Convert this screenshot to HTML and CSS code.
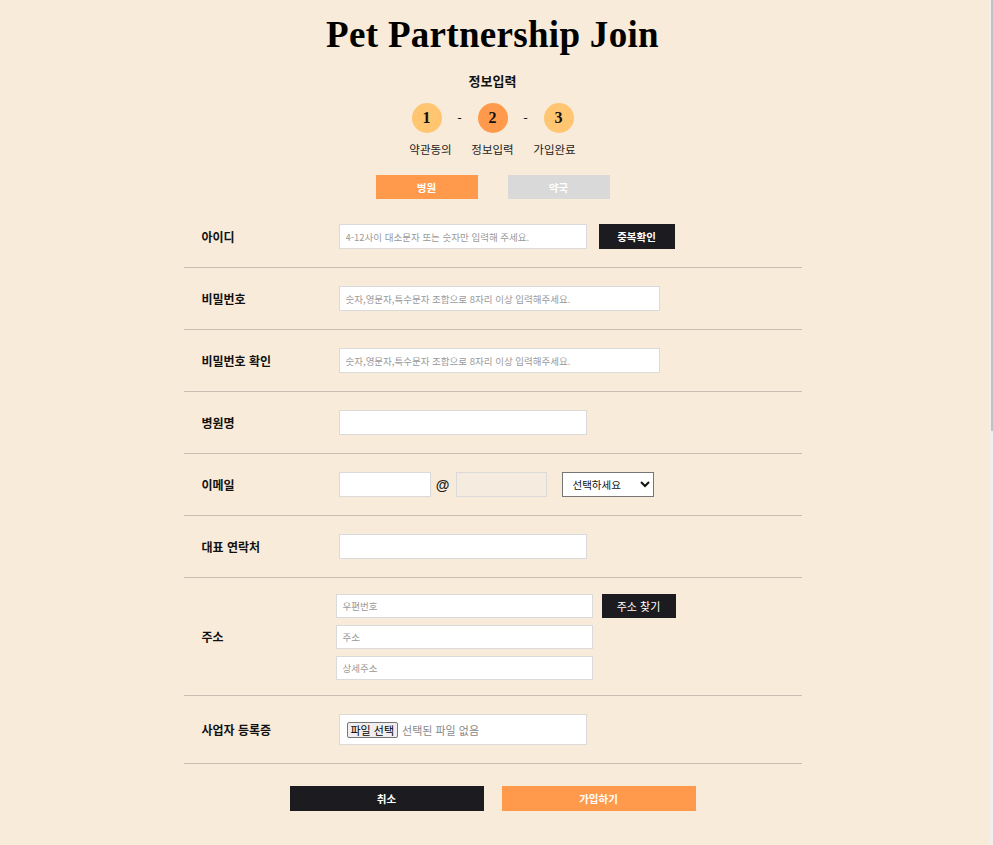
FILE: index.html
```html
<!DOCTYPE html>
<html lang="ko">
<head>
<meta charset="utf-8">
<title>Pet Partnership Join</title>
<link rel="stylesheet" href="styles.css">
</head>
<body>
<div class="page">
  <h1 class="title">Pet Partnership Join</h1>
  <h2 class="step-title">정보입력</h2>
  <div class="steps">
    <span class="circle light">1</span>
    <span class="dash">-</span>
    <span class="circle active">2</span>
    <span class="dash">-</span>
    <span class="circle light">3</span>
  </div>
  <div class="step-labels">
    <span>약관동의</span>
    <span>정보입력</span>
    <span>가입완료</span>
  </div>
  <div class="tabs">
    <button class="tab on" type="button">병원</button>
    <button class="tab off" type="button">약국</button>
  </div>

  <form class="form">
    <div class="row">
      <label class="label">아이디</label>
      <div class="field">
        <input class="inp w248" type="text" placeholder="4-12사이 대소문자 또는 숫자만 입력해 주세요.">
        <button class="dark-btn check" type="button">중복확인</button>
      </div>
    </div>
    <div class="row">
      <label class="label">비밀번호</label>
      <div class="field">
        <input class="inp w321" type="password" placeholder="숫자,영문자,특수문자 조합으로 8자리 이상 입력해주세요.">
      </div>
    </div>
    <div class="row">
      <label class="label">비밀번호 확인</label>
      <div class="field">
        <input class="inp w321" type="password" placeholder="숫자,영문자,특수문자 조합으로 8자리 이상 입력해주세요.">
      </div>
    </div>
    <div class="row">
      <label class="label">병원명</label>
      <div class="field">
        <input class="inp w248" type="text">
      </div>
    </div>
    <div class="row">
      <label class="label">이메일</label>
      <div class="field">
        <input class="inp w92" type="text">
        <span class="at">@</span>
        <input class="inp w91 disabled" type="text" disabled>
        <select class="sel">
          <option>선택하세요</option>
          <option>naver.com</option>
          <option>gmail.com</option>
        </select>
      </div>
    </div>
    <div class="row">
      <label class="label">대표 연락처</label>
      <div class="field">
        <input class="inp w248" type="text">
      </div>
    </div>
    <div class="row addr-row">
      <label class="label narrow">주소</label>
      <div class="addr">
        <div class="addr-line">
          <input class="inp w257 short" type="text" placeholder="우편번호">
          <button class="dark-btn find" type="button">주소 찾기</button>
        </div>
        <input class="inp w257 short" type="text" placeholder="주소">
        <input class="inp w257 short" type="text" placeholder="상세주소">
      </div>
    </div>
    <div class="row file-row">
      <label class="label">사업자 등록증</label>
      <div class="field">
        <div class="filebox">
          <span class="file-btn">파일 선택</span>
          <span class="file-text">선택된 파일 없음</span>
        </div>
      </div>
    </div>
  </form>

  <div class="actions">
    <button class="act cancel" type="button">취소</button>
    <button class="act join" type="button">가입하기</button>
  </div>
</div>
<div class="scrollbar"><div class="thumb"></div></div>
</body>
</html>
```

FILE: styles.css
```css
html {
  background: #f8ebd9;
}
body {
  margin: 0;
  background: #f8ebd9;
  font-family: "Noto Sans CJK KR", "Noto Sans", sans-serif;
  color: #111;
}
.page {
  box-sizing: border-box;
  min-height: 1657px;
  padding-right: 8px;
  display: flex;
  flex-direction: column;
  align-items: center;
}
.scrollbar {
  position: fixed;
  top: 0;
  right: 0;
  width: 4px;
  height: 100vh;
  background: #f1eeee;
}
.thumb {
  margin-left: 2px;
  width: 2px;
  height: 431px;
  background: #c1c1c1;
}
.title {
  margin: 15px 0 0;
  font-family: "Liberation Serif", serif;
  font-weight: 700;
  font-size: 37px;
  letter-spacing: 0.3px;
  line-height: 40px;
  color: #000;
}
.step-title {
  margin: 16px 0 0;
  font-size: 13px;
  font-weight: 700;
  line-height: 20px;
  color: #111;
}
.steps {
  margin-top: 12px;
  display: flex;
  align-items: center;
}
.circle {
  width: 30px;
  height: 30px;
  border-radius: 50%;
  display: flex;
  align-items: center;
  justify-content: center;
  font-family: "Liberation Serif", serif;
  font-weight: 700;
  font-size: 16px;
  color: #111;
}
.circle.light { background: #ffc570; }
.circle.active { background: #ff9a4d; }
.dash {
  width: 36px;
  text-align: center;
  font-size: 13px;
  line-height: 30px;
  color: #111;
}
.step-labels {
  margin-top: 8px;
  display: flex;
  gap: 18px;
  font-size: 11.5px;
  line-height: 16px;
  color: #222;
}
.step-labels span {
  width: 44px;
  text-align: center;
  white-space: nowrap;
}
.tabs {
  margin-top: 18px;
  display: flex;
  gap: 30px;
}
.tab {
  width: 102px;
  height: 24px;
  border: 0;
  padding: 0;
  font-family: inherit;
  font-size: 10.5px;
  font-weight: 700;
  color: #fff;
}
.tab.on { background: #ff9a4d; }
.tab.off { background: #d9d9d9; }

.form {
  margin-top: 7px;
  width: 618px;
}
.row {
  display: flex;
  align-items: center;
  height: 62px;
  box-sizing: border-box;
  border-bottom: 1px solid #c9beb1;
}
.label {
  width: 155px;
  box-sizing: border-box;
  padding-left: 18px;
  font-size: 12px;
  font-weight: 700;
  color: #111;
}
.label.narrow { width: 152px; }
.field {
  display: flex;
  align-items: center;
}
.inp {
  box-sizing: border-box;
  height: 25px;
  border: 1px solid #dadada;
  background: #fff;
  padding: 0 6px;
  font-family: inherit;
  font-size: 9.5px;
  outline: none;
}
.inp::placeholder { color: #9a9a9a; }
.inp.short { height: 24px; }
.w248 { width: 248px; }
.w321 { width: 321px; }
.w92 { width: 92px; }
.w91 { width: 91px; }
.w257 { width: 257px; }
.inp.disabled { background: #f5ebdf; }
.at {
  width: 26px;
  text-align: center;
  font-family: "Liberation Sans", sans-serif;
  font-weight: 700;
  font-size: 14px;
  color: #222;
  margin-left: -1px;
}
.sel {
  margin-left: 15px;
  width: 92px;
  height: 25px;
  border: 1px solid #767676;
  border-radius: 0;
  background: #fff;
  font-family: inherit;
  font-size: 10.5px;
  padding: 0 4px 0 6px;
  color: #111;
}
.dark-btn {
  background: #1c1b20;
  color: #fff;
  border: 0;
  padding: 0;
  font-family: inherit;
  font-size: 10.5px;
  font-weight: 700;
}
.check {
  margin-left: 12px;
  width: 76px;
  height: 25px;
}
.addr-row {
  height: 118px;
}
.addr {
  display: flex;
  flex-direction: column;
  gap: 7px;
}
.addr-line {
  display: flex;
  gap: 9px;
}
.find {
  width: 74px;
  height: 24px;
  font-weight: 400;
  font-size: 11px;
}
.file-row {
  height: 68px;
}
.filebox {
  box-sizing: border-box;
  width: 248px;
  height: 31px;
  border: 1px solid #dadada;
  background: #fff;
  display: flex;
  align-items: center;
  padding-left: 7px;
  gap: 4px;
}
.file-btn {
  box-sizing: border-box;
  height: 16px;
  padding: 0 3px;
  border: 1px solid #767676;
  border-radius: 2px;
  background: #efefef;
  font-size: 11px;
  line-height: 14px;
  color: #000;
}
.file-text {
  font-size: 11px;
  color: #888;
}
.actions {
  margin-top: 22px;
  display: flex;
  gap: 18px;
}
.act {
  width: 194px;
  height: 25px;
  border: 0;
  padding: 0;
  color: #fff;
  font-family: inherit;
  font-size: 10.5px;
  font-weight: 700;
}
.act.cancel { background: #1c1b20; }
.act.join { background: #ff9a4d; }
```
